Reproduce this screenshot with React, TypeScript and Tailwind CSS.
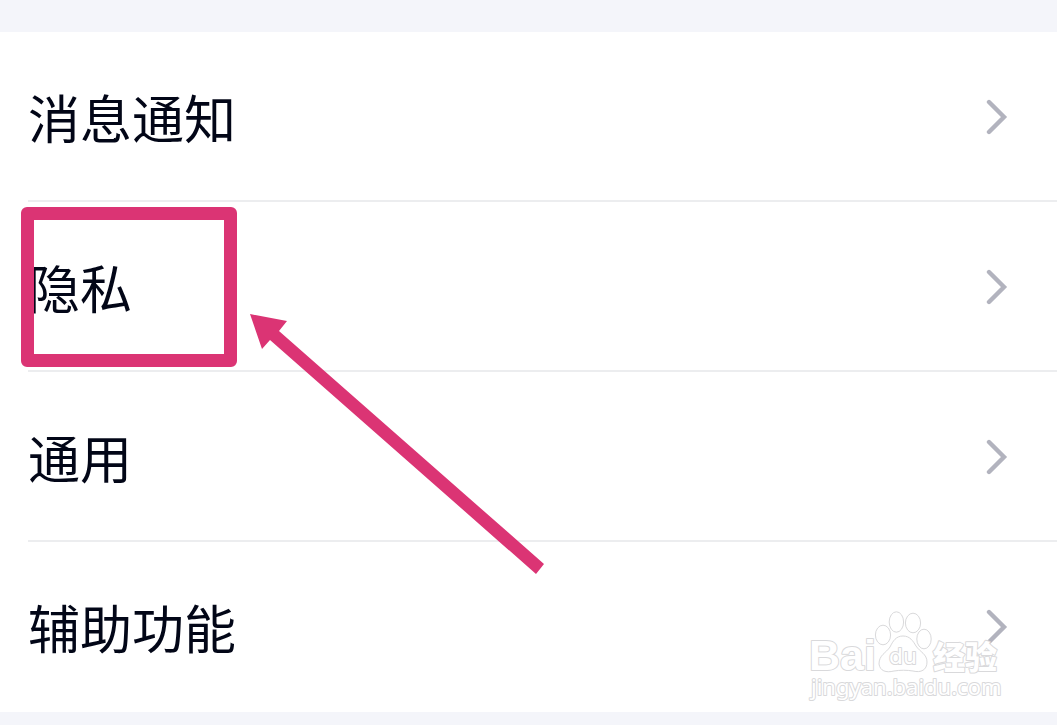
const items = ["消息通知", "隐私", "通用", "辅助功能"];

function Chevron() {
  return (
    <svg className="h-9 w-6 shrink-0" viewBox="0 0 24 36" fill="none" stroke="#b2b3be" strokeWidth="4.4" strokeLinecap="round" aria-hidden="true">
      <path d="M4 3 L19 18 L4 33" />
    </svg>
  );
}

function Highlight() {
  return (
    <>
      <span className="pointer-events-none absolute top-[5px] left-[21px] h-40 w-[216px] rounded-md border-[13px] border-[#db3474]" />
      <svg className="pointer-events-none absolute top-28 left-[250px] z-10 h-[262px] w-[296px]" viewBox="0 0 296 262" fill="#db3474" aria-hidden="true">
        <path d="M0 0 L37 7 L29 17 L294 250 L286 260 L20 26 L12 35 Z" />
      </svg>
    </>
  );
}

function Watermark() {
  return (
    <svg
      className="pointer-events-none absolute right-[53px] bottom-0 h-[104px] w-[196px]"
      viewBox="0 0 196 104"
      fill="#ffffff"
      stroke="#d9d9db"
      strokeWidth="1"
      strokeLinejoin="round"
      role="img"
      aria-label="Baidu 经验 jingyan.baidu.com"
    >
      <ellipse cx="75" cy="27" rx="7.6" ry="9.8" />
      <ellipse cx="88.4" cy="14" rx="7.2" ry="10.2" />
      <ellipse cx="105" cy="15" rx="7.6" ry="9.8" />
      <ellipse cx="116" cy="31" rx="7.2" ry="9.8" />
      <path d="M95 28 C88 28 85 33 82 39 C78 45 71 47 71 56 C72 63 78 65 86 63 C92 62 99 62 105 63 C113 65 119 62 119 54 C119 46 112 44 108 38 C105 33 102 28 95 28 Z" />
      <g style={{ paintOrder: "stroke" }} strokeWidth="2">
        <text x="1" y="62" fontSize="43" fontWeight="700" fontFamily="Liberation Sans, sans-serif">Bai</text>
        <text x="81" y="56" fontSize="22" fontWeight="400" fontFamily="DejaVu Sans, sans-serif">du</text>
        <text x="125" y="61" fontSize="32" fontWeight="900" fontFamily="Noto Sans CJK SC, sans-serif">经验</text>
        <text x="3" y="87" fontSize="22" fontWeight="400" fontFamily="Noto Sans, sans-serif">jingyan.baidu.com</text>
      </g>
    </svg>
  );
}

export default function App() {
  return (
    <main className="min-h-screen bg-[#f4f5fa] pt-8 font-['Noto_Sans_CJK_SC',sans-serif]">
      <nav className="relative bg-white" aria-label="设置">
        <ul>
          {items.map((item, i) => (
            <li key={item} className="relative">
              <button type="button" className="block w-full pl-7 text-left">
                <span className={`flex h-[170px] items-center justify-between border-b-2 pt-0.5 pr-12 ${i < items.length - 1 ? "border-[#ecedef]" : "border-transparent"}`}>
                  <span className="text-[52px] leading-[76px] text-[#020617]">{item}</span>
                  <Chevron />
                </span>
              </button>
              {item === "隐私" && <Highlight />}
            </li>
          ))}
        </ul>
        <Watermark />
      </nav>
    </main>
  );
}
